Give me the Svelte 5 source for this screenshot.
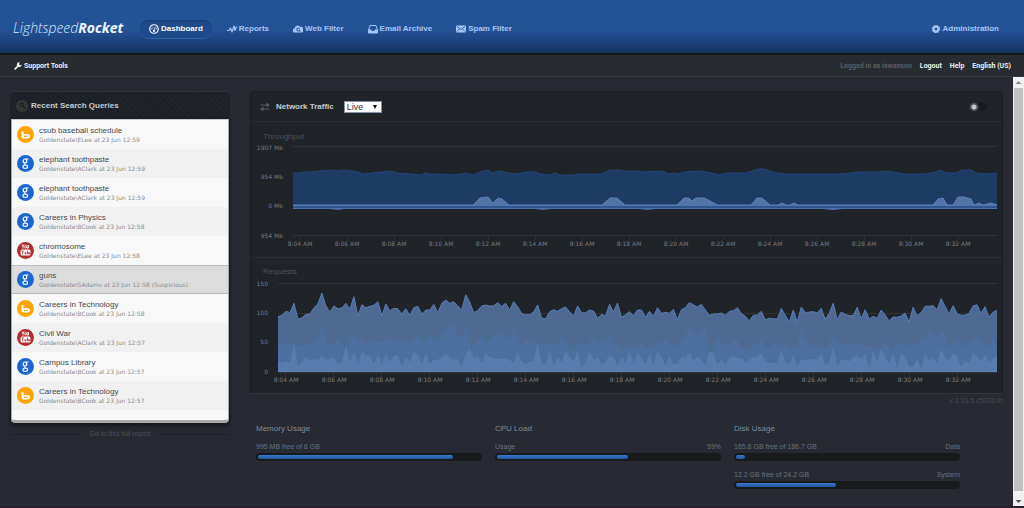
<script lang="ts">
  type Engine = 'bing' | 'google' | 'youtube';
  type Query = { text: string; user: string; time: string; engine: Engine; suspicious?: boolean };

  const nav = [
    { label: 'Dashboard', icon: 'gauge', active: true },
    { label: 'Reports', icon: 'pulse' },
    { label: 'Web Filter', icon: 'cloud' },
    { label: 'Email Archive', icon: 'inbox' },
    { label: 'Spam Filter', icon: 'mail' }
  ];

  const queries: Query[] = [
    { text: 'csub baseball schedule', user: 'ELee', time: '12:59', engine: 'bing' },
    { text: 'elephant toothpaste', user: 'AClark', time: '12:59', engine: 'google' },
    { text: 'elephant toothpaste', user: 'AClark', time: '12:59', engine: 'google' },
    { text: 'Careers in Physics', user: 'BCook', time: '12:58', engine: 'google' },
    { text: 'chromosome', user: 'ELee', time: '12:58', engine: 'youtube' },
    { text: 'guns', user: 'SAdams', time: '12:58', engine: 'google', suspicious: true },
    { text: 'Careers in Technology', user: 'BCook', time: '12:58', engine: 'bing' },
    { text: 'Civil War', user: 'AClark', time: '12:57', engine: 'youtube' },
    { text: 'Campus Library', user: 'BCook', time: '12:57', engine: 'google' },
    { text: 'Careers in Technology', user: 'BCook', time: '12:57', engine: 'bing' }
  ];

  const usage = [
    { title: 'Memory Usage', meters: [{ left: '995 MB free of 8 GB', right: '', value: 88 }] },
    { title: 'CPU Load', meters: [{ left: 'Usage', right: '59%', value: 59 }] },
    {
      title: 'Disk Usage',
      meters: [
        { left: '165.8 GB free of 186.7 GB', right: 'Data', value: 4 },
        { left: '12.2 GB free of 24.2 GB', right: 'System', value: 45 }
      ]
    }
  ];

  const times = Array.from({ length: 15 }, (_, i) => `8:${String(4 + i * 2).padStart(2, '0')} AM`);

  // throughput, as x,y pairs on the plot
  const inbound =
    '43,51 50,51 54,50 62,50 70,49 82,48 86,49 94,48 102,49 108,50 113,52 122,51 132,50 142,49 147,51 160,52 170,53 176,51 180,52 190,52 200,53 212,52 216,51 223,53 230,50 238,48 242,51 250,49 258,51 266,52 276,50 286,50 290,52 300,53 305,51 310,53 324,53 330,52 352,52 360,48 370,48 374,49 384,49 395,50 408,49 415,50 419,52 424,51 428,52 434,50 450,49 462,51 469,53 476,51 496,51 502,49 508,47 514,47 520,49 526,51 536,52 550,52 576,52 590,52 600,51 610,50 630,50 635,49 650,51 653,52 675,52 686,50 691,48 696,51 706,51 712,48 721,48 726,51 735,52 747,51';
  const outbound =
    '43,83 223,83 230,76 238,75 243,81 248,76 252,77 259,83 352,83 360,76 367,76 375,83 427,83 434,76 439,76 442,79 446,76 454,76 468,83 501,83 507,76 512,76 520,83 528,83 532,81 536,83 540,83 544,81 548,83 683,83 688,77 693,76 697,83 703,83 708,75 714,75 721,77 724,83 729,81 733,83 741,81 747,83';

  // requests, one sample every ten seconds, measured down from the top of the plot
  const all = [
    182,178,166,170,142,190,185,175,174,155,144,111,150,168,150,158,156,142,160,122,180,146,155,151,148,137,180,144,164,157,158,174,158,178,155,151,174,162,162,145,170,142,132,142,137,150,162,116,138,170,164,150,147,150,149,140,
    151,142,162,137,152,173,176,176,168,147,186,189,167,161,166,158,153,167,180,150,170,170,162,165,187,175,180,145,168,141,184,176,167,179,162,162,184,166,181,155,172,169,172,160,192,161,155,140,146,153,145,162,178,174,174,171,178,166,164,155,173,181,195,178,177,
    166,191,187,188,189,157,178,198,162,199,153,170,168,167,171,157,190,172,142,191,168,175,179,179,154,188,161,189,181,187,162,177,195,183,184,180,171,198,154,179,170,151,151,149,161,128,151,174,149,173,178,178,172,150,146,172,152,183,169,163
  ];
  const filtered = [
    268,266,261,270,258,272,267,266,258,260,238,210,255,270,265,252,270,272,250,228,262,244,266,256,256,256,262,250,243,258,260,262,256,264,246,236,258,256,235,250,254,235,222,203,215,240,242,210,262,274,255,235,260,252,238,232,
    236,246,246,218,258,266,252,254,262,264,262,266,262,262,266,242,256,270,282,262,262,270,258,244,272,250,274,230,272,258,284,272,270,270,268,258,274,274,270,258,264,246,264,266,270,256,236,214,222,246,218,222,290,276,238,260,266,266,256,252,270,280,278,268,264,
    248,276,274,264,256,272,262,278,272,270,220,252,266,270,266,274,280,262,238,264,256,266,254,272,264,266,270,268,276,280,276,250,276,278,254,272,264,274,258,270,250,254,218,238,250,226,238,274,268,256,256,276,256,252,240,256,264,274,246,272
  ];
  const blocked = [
    314,320,316,318,260,332,318,303,314,308,312,299,311,308,306,322,318,268,320,289,322,287,297,298,323,297,324,294,318,300,298,330,302,318,287,298,322,292,325,312,311,304,292,306,312,308,335,294,280,306,301,320,292,304,307,307,
    309,308,312,322,288,316,324,318,312,262,322,328,280,328,304,318,286,302,316,282,336,316,288,312,304,324,316,298,304,328,304,320,286,320,292,304,326,294,326,288,304,328,300,326,324,303,306,291,312,302,312,330,289,290,326,308,328,304,301,305,306,320,312,302,304,
    290,316,320,320,322,282,318,326,296,330,308,314,310,310,310,294,328,318,274,326,312,312,316,304,298,310,292,336,284,320,278,304,322,294,334,294,302,332,332,310,338,294,316,304,322,280,306,314,292,300,332,316,320,292,302,314,298,318,308,300
  ];

  function line(samples: number[]) {
    return samples.map((s, i) => `${(28 + (i * 719) / (samples.length - 1)).toFixed(1)},${(s / 3 - 2).toFixed(1)}`).join(' ');
  }

  let range = $state('live');
  let paused = $state(false);
</script>

{#snippet icon(name: string)}
  <svg class="icon" viewBox="0 0 20 20" aria-hidden="true">
    {#if name === 'gauge'}
      <circle cx="10" cy="10" r="8.500" fill="none" stroke="currentColor" stroke-width="2.400" />
      <path d="M10 15l1-8M4 9l3 1M16 9l-3 1M6 5l2 2M14 5l-1 2" fill="none" stroke="currentColor" stroke-width="1.600" />
      <circle cx="10" cy="14" r="2" fill="currentColor" />
    {:else if name === 'pulse'}
      <path d="M0 13h4l3-5 3 8 4-12 2 9 3-8" fill="none" stroke="currentColor" stroke-width="2.400" stroke-linejoin="round" />
    {:else if name === 'cloud'}
      <path d="M4 17a4 4 0 0 1-1-8 6 6 0 0 1 11-3 5 5 0 0 1 3 11z" fill="currentColor" />
      <circle cx="10" cy="11" r="3" fill="none" stroke="#24508f" stroke-width="1.800" />
      <path d="M12 13l3 3" stroke="#24508f" stroke-width="2" />
    {:else if name === 'inbox'}
      <path d="M4 3h12l3 9v6H1v-6z" fill="none" stroke="currentColor" stroke-width="2" stroke-linejoin="round" />
      <path d="M1 11h5l2 3h4l2-3h5v7H1z" fill="currentColor" />
    {:else if name === 'mail'}
      <rect x="0" y="3" width="20" height="14" rx="2" fill="currentColor" />
      <path d="M2 5l8 6 8-6M2 15l5-5M18 15l-5-5" fill="none" stroke="#24508f" stroke-width="1.600" />
    {:else if name === 'gear'}
      <circle cx="10" cy="10" r="5" fill="none" stroke="currentColor" stroke-width="4.500" />
      <circle cx="10" cy="10" r="7" fill="none" stroke="currentColor" stroke-width="2.600" stroke-dasharray="2.750" />
    {:else if name === 'wrench'}
      <path d="M3 17l8-8" stroke="currentColor" stroke-width="4.500" stroke-linecap="round" />
      <path d="M15 1a6 6 0 1 0 4 5l-4 2-3-3z" fill="currentColor" />
    {:else if name === 'search'}
      <circle cx="8" cy="8" r="5" fill="none" stroke="currentColor" stroke-width="2.500" />
      <path d="M12 12l6 6" stroke="currentColor" stroke-width="3" />
    {:else if name === 'swap'}
      <path d="M1 6h13M6 14h13" stroke="currentColor" stroke-width="2" />
      <path d="M13 1l7 5-7 5zM7 9l-7 5 7 5z" fill="currentColor" />
    {/if}
  </svg>
{/snippet}

{#snippet badge(engine: Engine)}
  <svg class="badge" viewBox="0 0 34 34" aria-hidden="true">
    {#if engine === 'bing'}
      <circle cx="17" cy="17" r="17" fill="#ffa500" />
      <path d="M9 10l4 1v5h7c8 0 8 9 0 9h-7c-3 0-4-2-4-4z" fill="#fff" />
      <path d="M13 20.500c2-2 4-2 5.500 0s-4 2.500-5.500 0z" fill="#ffa500" />
      <ellipse cx="20.500" cy="20.500" rx="1.800" ry="1.500" fill="#ffa500" />
    {:else if engine === 'google'}
      <circle cx="17" cy="17" r="17" fill="#1b67d2" />
      <ellipse cx="16" cy="12" rx="3.600" ry="4" fill="none" stroke="#fff" stroke-width="2.400" />
      <path d="M17 8h6M16 16c-3 2-1 3 2 5" fill="none" stroke="#fff" stroke-width="2" />
      <ellipse cx="16.500" cy="23.500" rx="4.600" ry="3.400" fill="none" stroke="#fff" stroke-width="2.200" />
    {:else}
      <circle cx="17" cy="17" r="17" fill="#b32d2f" />
      <path d="M10 5l2 4 2-4M12 9v4M23 6v6h-3V6" fill="none" stroke="#fff" stroke-width="1.800" />
      <ellipse cx="17" cy="9.500" rx="1.600" ry="2.600" fill="none" stroke="#fff" stroke-width="1.600" />
      <rect x="7" y="15" width="20" height="12" rx="3" fill="#fff" />
      <path d="M9 18h5M11.500 18v7M16 20v4h2v-4M21 17v7h2v-3h-2M27 21h-2v3h2" fill="none" stroke="#b32d2f" stroke-width="1.500" />
    {/if}
  </svg>
{/snippet}

<div class="page">
  <header>
    <a class="logo" href="#home">Lightspeed<b>Rocket</b></a>
    <nav>
      {#each nav as item}
        <a href="#{item.icon}" class:active={item.active}>{@render icon(item.icon)}{item.label}</a>
      {/each}
    </nav>
    <a class="admin" href="#admin">{@render icon('gear')}Administration</a>
  </header>

  <div class="toolbar">
    <a href="#tools">{@render icon('wrench')}Support Tools</a>
    <div class="account">
      <span>Logged in as iswanson</span>
      <a href="#logout">Logout</a>
      <a href="#help">Help</a>
      <a href="#language">English (US)</a>
    </div>
  </div>

  <div class="body">
    <main>
      <aside>
        <section class="recent">
          <h2><span class="disc">{@render icon('search')}</span>Recent Search Queries</h2>
          <ul>
            {#each queries as q}
              <li class:suspicious={q.suspicious}>
                {@render badge(q.engine)}
                <div>
                  <p class="query">{q.text}</p>
                  <p class="meta">Goldenstate\{q.user} at 23 Jun {q.time}{q.suspicious ? ' (Suspicious)' : ''}</p>
                </div>
              </li>
            {/each}
          </ul>
        </section>
        <a class="more" href="#report">Go to this full report</a>
      </aside>

      <div class="content">
        <section class="traffic">
          <div class="traffic-head">
            {@render icon('swap')}
            <h2><label for="range">Network Traffic</label></h2>
            <select id="range" bind:value={range}>
              <option value="live">Live</option>
              <option value="day">Day</option>
            </select>
            <input class="toggle" type="checkbox" aria-label="Pause live traffic" bind:checked={paused} />
          </div>

          <svg class="chart" viewBox="1 0 751 135" role="img" aria-label="Throughput">
            <text class="title" x="13" y="17">Throughput</text>
            <path class="rule" d="M42 24.500h705M42 113.500h705" />
            <polygon fill="#1e3b63" points="{inbound} 747,84 43,84" />
            <polyline fill="none" stroke="#21477a" points={inbound} />
            <polygon fill="#5275a8" points="{outbound} 747,84 43,84" />
            <polyline fill="none" stroke="#5b81bd" points={outbound} />
            <path fill="#2f568e" d="M43 84h704v2H43z" />
            <path fill="#5b7db4" d="M43 86h704v1H43z" />
            <path fill="#4d71aa" d="M43 86h704v1h-154l-10 1-10-1H405l-7 1-8-1H300l-7 1-8-1H95l-7 1-8-1H43z" />
            <g class="y-labels">
              <text x="33" y="28">1907 Mb</text>
              <text x="33" y="57">954 Mb</text>
              <text x="33" y="86">0 Mb</text>
              <text x="33" y="116">954 Mb</text>
            </g>
            {#each times as t, i}
              <path class="rule" d="M{50.5 + i * 47} 113v5" />
              <text class="x-label" x={50 + i * 47} y="124">{t}</text>
            {/each}
          </svg>

          <svg class="chart second" viewBox="1 0 751 135" role="img" aria-label="Requests">
            <text class="title" x="13" y="16">Requests</text>
            <path class="rule" d="M28 25.500h719M28 55.500h719M28 114.500h719" />
            <polygon fill="#4e6a92" points="{line(all)} 747,114 28,114" />
            <polygon fill="#4d6f9f" points="{line(filtered)} 747,114 28,114" />
            <polygon fill="#5a7bae" points="{line(blocked)} 747,114 28,114" />
            <polyline fill="none" stroke="#567eb8" points={line(all)} />
            <path fill="#5d83bd" d="M28 113h719v1H28z" />
            <g class="y-labels">
              <text x="18" y="28">150</text>
              <text x="18" y="57">100</text>
              <text x="18" y="86">50</text>
              <text x="18" y="116">0</text>
            </g>
            {#each times as t, i}
              <path class="rule" d="M{35.5 + i * 48} 115v4" />
              <text class="x-label" x={36 + i * 48} y="124">{t}</text>
            {/each}
          </svg>
        </section>

        <p class="version">v 2.10.5.c50310b</p>

        <div class="usage">
          {#each usage as group}
            <section>
              <h3>{group.title}</h3>
              {#each group.meters as m}
                <div class="meter">
                  <p><span>{m.left}</span><span>{m.right}</span></p>
                  <div class="track"><div class="fill" style="width:{m.value}%"></div></div>
                </div>
              {/each}
            </section>
          {/each}
        </div>
      </div>
    </main>

    <div class="scrollbar" aria-hidden="true">
      <svg viewBox="0 0 11 11"><path d="M5.500 4l3 3h-6z" fill="#8a8a8a" /></svg>
      <div class="thumb"></div>
      <svg viewBox="0 0 11 11"><path d="M5.500 8l3-3h-6z" fill="#505050" /></svg>
    </div>
  </div>
</div>

<style>
  :global(body) { background:#272a32; }
  .page { min-height:100vh; display:flex; flex-direction:column; box-sizing:border-box; border-bottom:2px solid #281e30; font-family:"Liberation Sans", Arial, sans-serif; font-size:8px; color:#68717d; }
  a { color:inherit; text-decoration:none; }
  p, h2, h3, ul { margin:0; padding:0; }
  .icon { width:10px; height:10px; flex:none; }

  header { height:53px; display:flex; align-items:center; padding:0 25px 0 13px; background:linear-gradient(#235397 0, #235397 55%, #1d4682 75%, #153260); border-bottom:2px solid #15171c; color:#a3c5f5; font-weight:bold; }
  .logo { width:127px; padding-top:2px; font:italic 300 14px/18px "Open Sans", sans-serif; color:#dce8f8; white-space:nowrap; }
  .logo b { font-weight:700; color:#eef4fc; }
  nav { display:flex; gap:6px; padding-top:4px; }
  nav a { display:flex; align-items:center; gap:2px; height:18px; padding:0 9px; border-radius:10px; white-space:nowrap; }
  nav .active { color:#fff; background:#1e4b8b; box-shadow:inset 0 1px 2px #173e76, 0 1px 0 #2e61a8; }
  .admin { display:flex; align-items:center; gap:2px; margin-left:auto; padding-top:4px; }

  .toolbar { display:flex; align-items:center; justify-content:space-between; height:21px; padding:0 13px 0 14px; background:#282b2f; border-bottom:1px solid #343841; font:bold 7px Roboto, sans-serif; color:#f0f0f0; }
  .toolbar a { display:flex; align-items:center; gap:2px; }
  .toolbar .icon { width:8px; height:8px; }
  .account { display:flex; gap:8px; }
  .account span { color:#5b5e63; }

  .body { flex:1; display:flex; }
  main { flex:1; display:flex; align-items:flex-start; gap:20px; padding:14px 10px 4px; min-width:0; }
  aside { flex:0 0 220px; }
  .recent { border-radius:4px 4px 0 0; background:repeating-linear-gradient(45deg, #1c2026 0 2px, #1f232a 2px 4px); border-top:1px solid #30343b; }
  h2 { display:flex; align-items:center; font-size:8px; color:#c9cdd3; }
  .recent h2 { height:27px; gap:3px; padding-left:6px; }
  .disc { display:flex; align-items:center; justify-content:center; width:12px; height:12px; border-radius:50%; background:#363635; color:#191b1e; }
  .disc .icon { width:7px; height:7px; }
  ul { list-style:none; margin:0 1px; padding-bottom:10px; border:1px solid #a9a9a9; border-top-color:#c8c8c8; border-bottom-width:3px; border-radius:0 0 4px 4px; background:#f8f8f8; box-shadow:0 2px 4px #111317; }
  li { display:flex; align-items:center; gap:5px; height:29px; box-sizing:border-box; padding-left:5px; }
  li:nth-child(even) { background:#f1f1f1; }
  li.suspicious { background:#dcdcdc; border-top:1px solid #bdbdbd; border-bottom:1px solid #bdbdbd; }
  .badge { width:17px; height:17px; }
  .query { font-size:8px; line-height:10px; color:#45484d; }
  .meta { font:6px/8px "DejaVu Sans", Verdana, sans-serif; color:#8c8c8c; }
  .more { display:flex; align-items:center; gap:8px; margin-top:6px; font-size:7px; line-height:10px; color:#4b4e53; }
  .more::before, .more::after { content:''; flex:1; height:1px; background:#1e2127; }

  .content { flex:1; min-width:0; }
  .traffic { border:1px solid #1b1d22; border-bottom-color:#34373e; border-radius:4px; background:#202328; }
  .traffic-head { display:flex; align-items:center; height:29px; padding:0 15px 0 9px; border-bottom:1px solid #282b31; }
  .traffic-head > .icon { color:#555a61; }
  .traffic-head h2 { margin:0 10px 0 6px; }
  select { appearance:none; width:38px; height:12px; padding:0 2px; border:1px solid #8795aa; border-radius:0; background:#fff url("data:image/svg+xml,%3Csvg xmlns='http://www.w3.org/2000/svg' viewBox='0 0 4 4'%3E%3Cpath d='M0 0h4L2 4z'/%3E%3C/svg%3E") no-repeat right 4px center / 4px 4px; color:#333; font:9px/10px "Liberation Sans", Arial, sans-serif; }
  .toggle { appearance:none; width:18px; height:9px; margin:0 0 0 auto; border-radius:5px; background:radial-gradient(circle at 5px 5px, #c5c6ca 0 2px, #484c59 3px 4px, #181a1d 5px); }
  .toggle:checked { background:radial-gradient(circle at 13px 5px, #c5c6ca 0 2px, #484c59 3px 4px, #181a1d 5px); }
  .chart { display:block; width:100%; height:auto; }
  .second { border-top:1px solid #2b2e34; }
  .chart text { font:6px "DejaVu Sans", Verdana, sans-serif; fill:#777b81; }
  .chart .title { font:8px "Liberation Sans", Arial, sans-serif; fill:#4d535c; }
  .y-labels text { text-anchor:end; }
  .chart .x-label { text-anchor:middle; }
  .rule { fill:none; stroke:#303236; }

  .version { margin-top:2px; font-size:7px; line-height:10px; text-align:right; color:#484b51; }
  .usage { display:grid; grid-template-columns:repeat(3, minmax(0, 1fr)); gap:13px; padding:18px 43px 0 6px; }
  h3 { margin-bottom:8px; font-size:8px; line-height:10px; font-weight:normal; color:#7f8b9b; }
  .meter { margin-bottom:9px; font-size:7px; }
  .meter p { display:flex; justify-content:space-between; line-height:10px; margin-bottom:1px; }
  .track { height:8px; box-sizing:border-box; padding:2px; border-radius:4px; background:#191a1b; }
  .fill { height:4px; border-radius:2px; background:linear-gradient(#3b79ca, #1e56a0); }

  .scrollbar { width:11px; display:flex; flex-direction:column; background:#f1f1f1; }
  .scrollbar svg { width:11px; height:11px; }
  .thumb { flex:1; margin:0 1px 4px; background:#c1c1c1; }
</style>
